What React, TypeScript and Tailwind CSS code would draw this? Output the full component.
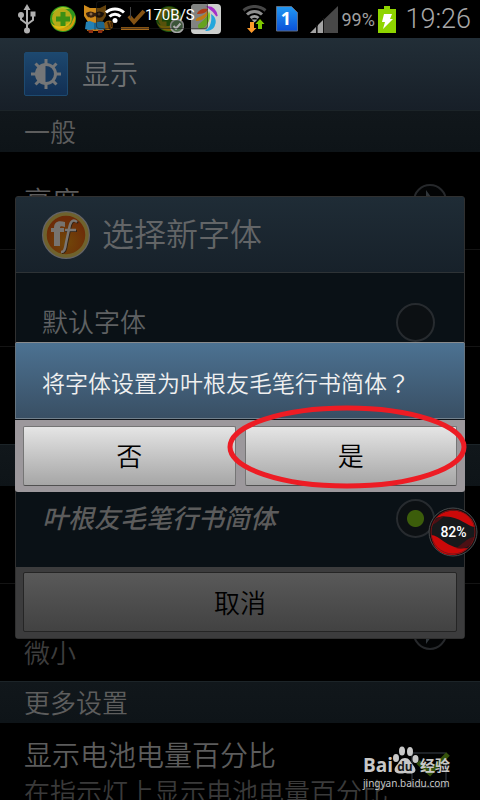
import React from "react";

const sans = "font-['Roboto','Noto_Sans_CJK_SC',sans-serif]";

function UsbIcon() {
  return (
    <svg width="18" height="30" viewBox="0 0 18 30" fill="none" stroke="#b0b0b0" strokeWidth="2">
      <path d="M9 26V4" />
      <path d="M9 0l-3.5 6h7z" fill="#b0b0b0" stroke="none" />
      <path d="M3 11v4.500l6 4.500M15 10v6l-6 4.500" />
      <circle cx="3" cy="11" r="3" fill="#b0b0b0" stroke="none" />
      <rect x="12.500" y="7.500" width="5" height="5" fill="#b0b0b0" stroke="none" />
      <circle cx="9" cy="26.500" r="3" fill="#b0b0b0" stroke="none" />
    </svg>
  );
}

function ShieldBall({ dim, badge }: { dim?: boolean; badge?: boolean }) {
  return (
    <svg width="28" height="28" viewBox="0 0 28 28">
      <g opacity={dim ? 0.6 : 1}>
        <circle cx="13" cy="14" r="13" fill="#2f961c" />
        <path d="M2 9C6 2 14 0 20 4c-7 0-13 1-18 5z" fill="#a9c427" />
        <circle cx="12" cy="13.500" r="10" fill="#b5ab18" />
        <path d="M1 17c4 7 14 8 20 2l4-9c2 8-4 16-12 16-6 0-11-4-12-9z" fill="#d0a00c" />
        <path d="M2 19c5 4 14 3 19-3-4 8-15 11-19 3z" fill="#e0bd12" />
        <path d="M10.500 7h5v4.500H20v5h-4.500V21h-5v-4.500H6v-5h4.500z" fill="#3c8f14" />
      </g>
      {badge && (
        <g>
          <circle cx="21" cy="21" r="6.500" fill="#4b6b48" stroke="#a6a6a6" strokeWidth="1.500" />
          <path d="M17.500 21l2.500 2.500 4.500-5" fill="none" stroke="#ddd" strokeWidth="2" />
        </g>
      )}
    </svg>
  );
}

function RaccoonIcon() {
  return (
    <svg width="30" height="28" viewBox="0 0 30 28">
      <path d="M20 18c4-4 9-3 9 2s-5 6-9 4z" fill="#b0700f" />
      <path d="M24 17l2 7M27 17l1 5" stroke="#54300b" strokeWidth="2" />
      <path d="M6 15h11l3 11H3z" fill="#c47a13" />
      <path d="M0 0l6 3h10l6-3v11l-4 6H4l-4-6z" fill="#d08b1b" />
      <path d="M2 8c3-2 6-2 9 0 3-2 6-2 9 0 0 5-6 6-9 3-3 3-9 2-9-3z" fill="#35200f" />
      <circle cx="7" cy="9" r="1.500" fill="#8d6a43" />
      <circle cx="15" cy="9" r="1.500" fill="#8d6a43" />
      <path d="M2 17l4-1 5 2 5-2 4 1 1 7-4 1-6-1-6 1-4-1z" fill="#2381b5" />
      <path d="M11 18v7" stroke="#0f4d75" />
      <path d="M4 25h5v3H5zM14 25h5l-1 3h-4z" fill="#8c2e10" />
      <path d="M12 0h10v12l-4 5h-6z" fill="#000" opacity=".4" />
    </svg>
  );
}

function DownloadDoneIcon() {
  return (
    <svg width="28" height="24" viewBox="0 0 28 24" fill="none" stroke="#a5681a">
      <path d="M8 9l5 6L23 4" strokeWidth="4" />
      <path d="M0 21.500h28" strokeWidth="3" />
      <path d="M9.500 0v11" stroke="#555" strokeWidth="1" />
    </svg>
  );
}

function BeachBallIcon() {
  return (
    <svg width="30" height="30" viewBox="0 0 30 30">
      <rect width="30" height="30" rx="4" fill="#cdcfcd" />
      <path d="M0 4a4 4 0 014-4h12v26H0z" fill="#a2a4a2" />
      <path d="M6 10C7 6 12 4 17 5c-1 4-6 5-11 5z" fill="#dc4a1c" />
      <path d="M5 17c-1-5 8-3 12-11 1 5-4 11-12 11z" fill="#f09a16" />
      <path d="M7 22c0-4 9-5 11-15 3 6-1 16-8 18-2 0-3-1-3-3z" fill="#7fcb28" />
      <path d="M14 27c6-4 7-11 6-17 4 2 6 7 4 11-1 4-5 6-10 6z" fill="#24a7dc" />
      <path d="M17 3c5 0 8 4 9 9-2-3-5-6-9-9z" fill="#a530c9" stroke="#a530c9" strokeWidth="1.500" />
    </svg>
  );
}

function WifiTrafficIcon() {
  return (
    <svg width="26" height="28" viewBox="0 0 26 28" fill="none" strokeWidth="3">
      <path d="M1.500 5.500a17 17 0 0122 0" stroke="#474747" />
      <path d="M5 9.500a11 11 0 0115 0" stroke="#8e8e8e" />
      <path d="M8.500 13a6 6 0 018 0" stroke="#9e9e9e" />
      <path d="M9.500 14.500h6l-3 3z" fill="#a8a8a8" stroke="none" />
      <path d="M8 17h4v6h2.500L9.500 28 5 23h3z" fill="#fd9a2b" stroke="none" />
      <path d="M18 14l4.500 5H20v5h-4v-5h-2.500z" fill="#80c800" stroke="none" />
    </svg>
  );
}

function SimIcon() {
  return (
    <svg width="22" height="26" viewBox="0 0 22 26">
      <defs>
        <linearGradient id="sim" x1="0" y1="0" x2="0" y2="1">
          <stop offset="0" stopColor="#2299f2" />
          <stop offset="1" stopColor="#0a50d8" />
        </linearGradient>
      </defs>
      <path d="M.5.500h15l6 6v18.500H.5z" fill="url(#sim)" stroke="#5f6d80" />
      <text x="10" y="19" textAnchor="middle" fontSize="18" fontWeight="700" fontFamily="Noto Sans" fill="#fff">1</text>
    </svg>
  );
}

function SignalIcon() {
  return (
    <svg width="28" height="27" viewBox="0 0 28 27">
      <path d="M0 27L28 0v27z" fill="#484848" />
      <path d="M0 27l6-6v6zM8 27v-8l5-5v13z" fill="#a3a3a3" />
      <path d="M6.500 27V19M13.500 27V12" stroke="#111" />
    </svg>
  );
}

function BatteryIcon() {
  return (
    <svg width="18" height="27" viewBox="0 0 18 27">
      <path d="M6 0h6v3h6v24H0V3h6z" fill="#8fd400" />
      <path d="M6 8h8l-2 5h3L5 23l2-7H4z" fill="#fff" />
    </svg>
  );
}

function StatusBar() {
  return (
    <header className="relative flex h-[38px] shrink-0 items-center justify-between bg-black pr-[9px] pl-[18px]">
      <div className="flex items-center gap-[7px]">
        <div className="mr-[7px]"><UsbIcon /></div>
        <div className="mr-[-1px]"><ShieldBall /></div>
        <RaccoonIcon />
        <DownloadDoneIcon />
        <ShieldBall dim badge />
        <BeachBallIcon />
      </div>
      <div className="flex items-center">
        <WifiTrafficIcon />
        <div className="ml-2"><SimIcon /></div>
        <div className="ml-3"><SignalIcon /></div>
        <span className="ml-[3px] w-[34px] pt-[2px] text-[18px] leading-6 text-[#a0a0a0]">99%</span>
        <div className="ml-[3px]"><BatteryIcon /></div>
        <time className="ml-[9px] text-[27px] leading-8 font-light text-[#a8a8a8]">19:26</time>
      </div>
      <div className="absolute top-px left-24 flex h-7 w-28 items-center rounded-[3px] border border-[#222]/50 bg-black/20 pl-2">
        <svg width="20" height="16" viewBox="0 0 20 16" fill="none" stroke="#fff" strokeWidth="3">
          <path d="M1 5.500a13 13 0 0118 0M4.500 9.500a8 8 0 0111 0" />
          <circle cx="10" cy="13.500" r="2.500" fill="#fff" stroke="none" />
        </svg>
        <span className="ml-5 text-[15px] leading-5 whitespace-nowrap text-white">170B/S</span>
      </div>
    </header>
  );
}

function SectionBar({ children }: { children?: React.ReactNode }) {
  return (
    <h2 className="h-[42px] shrink-0 border-t border-[#1c2428] bg-linear-to-b from-[#11171b] to-[#0e1418] px-6 text-[26px] leading-[45px] font-[350] text-[#5d5d5d]">
      {children}
    </h2>
  );
}

function ChevronButton({ label }: { label: string }) {
  return (
    <button aria-label={label} className="flex size-[34px] items-center justify-center rounded-full border-2 border-[#26282b] bg-[#030405]">
      <svg width="12" height="22" viewBox="0 0 12 22" fill="#30363b">
        <path d="M2 0l8 11L2 22v-7l3-4-3-4z" />
      </svg>
    </button>
  );
}

function SettingsPage() {
  return (
    <div className="flex flex-col">
      <div className="flex h-[72px] shrink-0 items-center gap-[14px] bg-linear-to-b from-[#222e37] to-[#171f28] px-6">
        <div className="flex size-11 items-center justify-center rounded-[2px] border border-[#1d4a70] bg-linear-to-b from-[#1d486f] to-[#122f53]">
          <svg width="30" height="30" viewBox="0 0 30 30">
            <g stroke="#747678" strokeWidth="3">
              <path d="M15 0v6M15 24v6M0 15h6M24 15h6M4.500 4.500L9 9M21 21l4.500 4.500M25.500 4.500L21 9M9 21l-4.500 4.500" />
            </g>
            <circle cx="15" cy="15" r="9.500" fill="#17395e" stroke="#747678" strokeWidth="3" />
            <path d="M14.500 5a10 10 0 000 20z" fill="#747678" />
          </svg>
        </div>
        <h1 className="pt-1 text-[28px] leading-10 font-[350] text-[#6f7173]">显示</h1>
      </div>
      <SectionBar>一般</SectionBar>
      <div className="flex h-[98px] shrink-0 items-center justify-between border-b border-[#141414] pr-[33px] pl-6">
        <span className="pt-1 text-[28px] leading-9 font-[350] text-[#5c5c5c]">亮度</span>
        <ChevronButton label="亮度" />
      </div>
      <div className="h-[97px] shrink-0 border-b border-[#141414]" />
      <div className="h-[97px] shrink-0" />
      <SectionBar />
      <div className="h-[98px] shrink-0 border-b border-[#141414]" />
      <div className="flex h-[97px] shrink-0 items-center justify-between pr-[33px] pl-6">
        <span className="self-end pb-[10px] text-[26px] leading-[34px] font-[350] text-[#3d3d3d]">微小</span>
        <ChevronButton label="微小" />
      </div>
      <SectionBar>更多设置</SectionBar>
      <label className="flex shrink-0 justify-between pt-[14px] pr-[33px] pl-6">
        <span className="flex flex-col whitespace-nowrap">
          <span className="text-[28px] leading-10 font-[350] text-[#5c5c5c]">显示电池电量百分比</span>
          <span className="text-[26px] leading-8 font-[350] text-[#3a3a3a]">在指示灯上显示电池电量百分比</span>
        </span>
        <span className="relative -ml-10 pt-[15px]">
          <input type="checkbox" defaultChecked className="block size-9 appearance-none rounded-[2px] border-2 border-[#1d2126] bg-[#020303]" />
          <svg className="pointer-events-none absolute top-[13px] left-1" width="36" height="28" viewBox="0 0 36 28">
            <path d="M3 12l12 11L33 4" fill="none" stroke="#34520b" strokeWidth="5" />
          </svg>
        </span>
      </label>
    </div>
  );
}

function FontLogo() {
  return (
    <svg width="48" height="48" viewBox="0 0 48 48">
      <defs>
        <radialGradient id="orange" cy=".65">
          <stop offset="0" stopColor="#714809" />
          <stop offset="1" stopColor="#6d2b08" />
        </radialGradient>
      </defs>
      <circle cx="24" cy="24" r="23" fill="url(#orange)" stroke="#636368" strokeWidth="2" />
      <circle cx="24" cy="24" r="21" fill="none" stroke="#6f622d" strokeWidth="3.500" />
      <path d="M12 35V21H9v-4h3c0-6 4-8 11-6v5c-4-1-5-1-5 1h4v4h-4v14z" fill="#77736f" />
      <path d="M23 20h12M36 12c-5-5-7 1-8 7l-3 14c-1 7-2 9-5 9" fill="none" stroke="#302316" strokeWidth="2" />
      <path d="M23 19h11M35 11c-5-4-7 1-8 7l-3 14c-1 7-2 9-5 9" fill="none" stroke="#7a7673" strokeWidth="2.500" />
    </svg>
  );
}

function FontOption({ name, selected, brush }: { name: string; selected?: boolean; brush?: boolean }) {
  return (
    <label className="flex h-[98px] items-center justify-between pr-[29px] pl-[26px]">
      <span
        className={
          brush
            ? "pt-[2px] text-[26px] leading-9 font-medium text-[#5c5c5c] italic"
            : "pt-[2px] text-[26px] leading-9 font-[350] text-[#5f6163]"
        }
      >
        {name}
      </span>
      <input
        type="radio"
        name="font"
        defaultChecked={selected}
        className="size-[39px] appearance-none rounded-full border-2 border-[#272b2f] bg-[#0c1013] checked:bg-[radial-gradient(circle,#3c5d0b_8px,#0c1013_9px)]"
      />
    </label>
  );
}

function FontDialog() {
  return (
    <div className="absolute inset-x-[15px] top-[35px] bottom-0 flex items-center">
      <section role="dialog" aria-label="选择新字体" className="w-full rounded-[3px] border border-[#303030] bg-[#0a1116]">
        <div className="flex h-[76px] items-center gap-3 border-b border-[#2e3336] bg-linear-to-b from-[#1f2c36] to-[#17212a] pl-[26px]">
          <FontLogo />
          <h2 className="text-[32px] leading-10 font-[350] text-[#636567]">选择新字体</h2>
        </div>
        <FontOption name="默认字体" />
        <div className="h-[98px]" />
        <FontOption name="叶根友毛笔行书简体" selected brush />
        <div className="bg-[#3c3c3d] px-[7px] pt-[5px] pb-[6px]">
          <button className="h-[60px] w-full rounded-[2px] border border-[#252525] bg-linear-to-b from-[#595959] to-[#424242] pt-1 text-[26px] leading-9 font-[350] text-black">
            取消
          </button>
        </div>
      </section>
    </div>
  );
}

function ConfirmDialog() {
  return (
    <div className="absolute inset-x-[15px] top-[34px] bottom-0 flex items-center">
      <section role="alertdialog" aria-label="将字体设置" className="w-full overflow-hidden rounded-[3px] bg-[#9c989c]">
        <div className="flex h-[77px] items-center border border-t-[#888b8d] border-r-[#66747f] border-b-[#73818d] border-l-[#66747f] bg-linear-to-b from-[#4c7292] to-[#394f64] pt-[6px] pl-[26px]">
          <p className="text-[23px] leading-8 font-[350] whitespace-nowrap text-[#f0f0f0]">
            将字体设置为叶根友毛笔行书简体
            <span lang="zh-TW" className="font-['Noto_Sans_CJK_TC']">？</span>
          </p>
        </div>
        <div className="flex gap-[9px] border-t border-[#10151b] px-2 pt-[6px] pb-[6px]">
          {["否", "是"].map((label) => (
            <button
              key={label}
              className="h-[60px] flex-1 rounded-[2px] border border-[#757575] border-b-[#505050] bg-linear-to-b from-[#e5e5e5] to-[#a6a6a6] pt-[2px] text-[26px] leading-9 font-[350] text-black"
            >
              {label}
            </button>
          ))}
        </div>
      </section>
    </div>
  );
}

function MemoryBall() {
  return (
    <button aria-label="82%" className="absolute top-[507px] right-[2px] size-[50px]">
      <svg width="50" height="50" viewBox="0 0 50 50">
        <circle cx="25" cy="25" r="24" fill="#17191b" stroke="#46484a" />
        <circle cx="25" cy="25" r="22.500" fill="#17191b" stroke="#080808" />
        <path d="M8 11C17 0 43 0 47 20 38 20 29 5 8 11z" fill="#cc0909" />
        <path d="M3 28c9 0 18 16 37 13C31 52 6 52 3 28z" fill="#cc0909" />
        <path d="M4 18c3-6 8-9 13-9-5 3-8 7-13 9zM46 30c-7 1-11 7-18 11 9 2 16-2 18-11z" fill="#4c1014" />
        <circle cx="25" cy="25" r="22" fill="none" stroke="#7d1417" strokeWidth="1" />
        <text x="25.500" y="30" textAnchor="middle" fontSize="14" fontFamily="Roboto" fontWeight="500" fill="#fff">82%</text>
      </svg>
    </button>
  );
}

function Watermark() {
  return (
    <div className="absolute right-[26px] bottom-[9px] flex w-[91px] flex-col text-[#c8c8c8]">
      <div className="flex h-[30px] items-end">
        <span className="w-[29px] font-['Open_Sans'] text-[19px] leading-[20px] font-bold">Bai</span>
        <svg width="27" height="29" viewBox="0 0 27 29" fill="#c8c8c8">
          <ellipse cx="4" cy="12" rx="3" ry="4" />
          <ellipse cx="10" cy="5" rx="3" ry="4.500" />
          <ellipse cx="18" cy="5.500" rx="3" ry="4.500" />
          <ellipse cx="23.500" cy="13" rx="3" ry="4" />
          <path d="M13 12c5 0 5 4 8 7 6 7 0 10-8 8-8 2-13-1-9-7 4-4 4-8 9-8z" />
          <text x="13" y="25" textAnchor="middle" fontSize="12" fontWeight="700" fontFamily="Open Sans" fill="#17191b">du</text>
        </svg>
        <span className="ml-px font-['Noto_Sans_CJK_SC'] text-[15px] leading-5 font-bold whitespace-nowrap">经验</span>
      </div>
      <span className="font-['Noto_Sans'] text-[10px] leading-4 whitespace-nowrap">jingyan.baidu.com</span>
    </div>
  );
}

export default function App() {
  return (
    <main className={`relative flex h-screen flex-col overflow-hidden bg-black ${sans}`}>
      <StatusBar />
      <SettingsPage />
      <FontDialog />
      <ConfirmDialog />
      <svg className="pointer-events-none absolute top-[404px] right-[12px]" width="242" height="86" viewBox="0 0 242 86">
        <ellipse cx="121" cy="43" rx="117" ry="39" fill="none" stroke="#ed1c24" strokeWidth="5" />
      </svg>
      <MemoryBall />
      <Watermark />
    </main>
  );
}
